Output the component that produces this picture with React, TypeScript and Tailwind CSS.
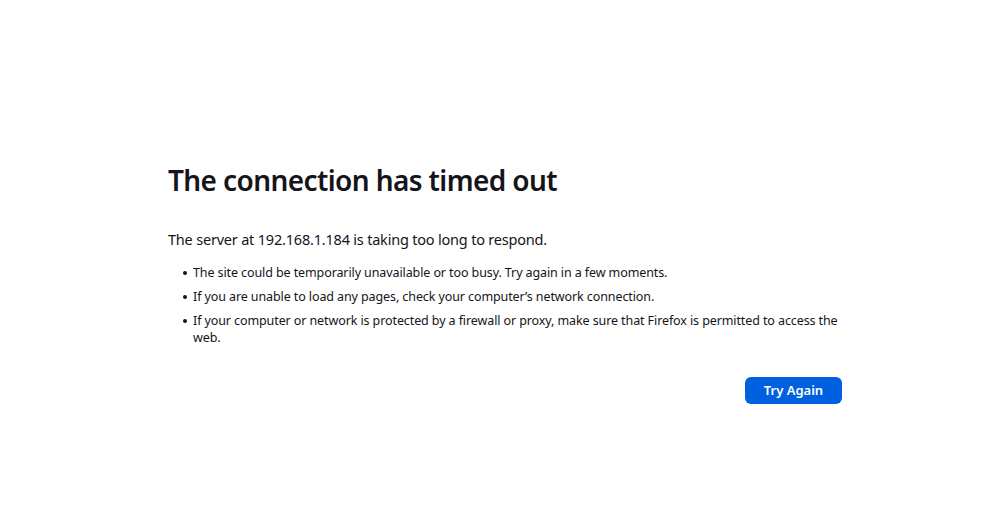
const tips = [
  "The site could be temporarily unavailable or too busy. Try again in a few moments.",
  "If you are unable to load any pages, check your computer\u2019s network connection.",
  "If your computer or network is protected by a firewall or proxy, make sure that Firefox is permitted to access the web.",
];

export default function App() {
  return (
    <div className="min-h-[531px] w-full bg-white font-['Noto_Sans',sans-serif] text-[#15141a]">
      <div className="w-[674px] ml-[168px] pt-[163px]">
        <h1 className="text-[28px] leading-[34px] font-semibold tracking-[-0.6px]">The connection has timed out</h1>

        <p className="mt-[32px] text-[14.5px] leading-[20px] tracking-[-0.2px]">
          The server at 192.168.1.184 is taking too long to respond.
        </p>

        <ul className="mt-[15px] text-[12.5px] leading-[17px] tracking-[-0.1px]">
          {tips.map((tip, i) => (
            <li key={i} className="mb-[7px] flex">
              <span className="w-[25px] h-[17px] shrink-0 flex items-center pl-[15px]">
                <span className="w-[4px] h-[4px] rounded-full bg-[#15141a]" />
              </span>
              <span>{tip}</span>
            </li>
          ))}
        </ul>

        <div className="flex justify-end mt-[31px]">
          <button className="w-[97px] h-[27px] rounded-[6px] bg-[#0061e0] text-white text-[13px] font-semibold">
            Try Again
          </button>
        </div>
      </div>
    </div>
  );
}
